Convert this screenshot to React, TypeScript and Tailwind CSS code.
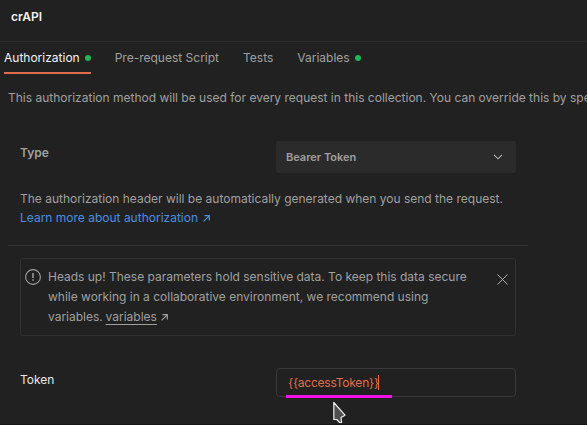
import type { ReactNode } from "react";

function ExternalArrow({ className = "" }: { className?: string }) {
  return (
    <svg className={className} width="7" height="7" viewBox="0 0 7 7" fill="none" stroke="currentColor" strokeWidth="1.2">
      <path d="M.6 6.4 6.2.8M1.4.7h4.9v4.9" />
    </svg>
  );
}

function Tab({ label, active = false, dot = false }: { label: string; active?: boolean; dot?: boolean }) {
  return (
    <div className={`flex h-8 items-center border-b-2 pt-0.5 ${active ? "border-[#e06e4c] text-[#f2f2f2]" : "border-transparent text-[#a0a0a0]"}`}>
      <span className="whitespace-nowrap">{label}</span>
      {dot && <span className="ml-[5px] size-1.5 rounded-full bg-[#22b455]" />}
    </div>
  );
}

function Line({ children }: { children: ReactNode }) {
  return <div className="flex h-5 items-center whitespace-pre">{children}</div>;
}

export default function App() {
  return (
    <div className="relative h-[425px] w-[587px] overflow-hidden border-b border-[#181416] bg-[#212121] font-['Inter',sans-serif] text-[12px] leading-5 text-[#a0a0a0]">
      <header className="h-[42px] border-b border-[#303030] pt-[7px] pl-[11px] font-semibold text-[#f2f2f2]">crAPI</header>
      <nav className="flex gap-6 pl-1">
        <Tab label="Authorization" active dot />
        <Tab label="Pre-request Script" />
        <Tab label="Tests" />
        <Tab label="Variables" dot />
      </nav>
      <p className="mt-[14px] ml-2 whitespace-nowrap">
        This authorization method will be used for every request in this collection. You can override this by spe
      </p>

      <main className="mt-[33px] ml-2 w-[520px] pl-3">
        <div className="flex h-8 w-[496px] justify-between">
          <span className="mt-0.5 font-semibold">Type</span>
          <div className="flex w-60 items-center justify-between rounded-[3px] bg-[#2b2b2b] pr-[13px] pl-[10px] text-[11px] font-semibold">
            Bearer Token
            <svg width="10" height="6" viewBox="0 0 10 6" fill="none" stroke="#b0b0b0" strokeWidth="1.1">
              <path d="m1 .8 4 4 4-4" />
            </svg>
          </div>
        </div>
        <p className="mt-4 whitespace-nowrap">The authorization header will be automatically generated when you send the request.</p>
        <div className="flex h-[18px] items-center text-[#4a8ee0]">
          Learn more about authorization
          <ExternalArrow className="ml-[5px]" />
        </div>
        <div className="mt-[18px] -ml-3 h-px bg-[#323232]" />
        <section className="mt-3 flex h-[78px] w-[496px] rounded-[3px] border border-[#303030] pt-2 pl-1">
          <svg className="mt-[2px] shrink-0" width="16" height="16" viewBox="0 0 16 16" fill="none" stroke="#a0a0a0">
            <circle cx="8" cy="8" r="7.4" strokeWidth="1.1" />
            <path d="M8 4v5" strokeWidth="1.5" />
            <path d="M8 10.3v1.5" strokeWidth="1.5" />
          </svg>
          <div className="ml-[7px] grow tracking-[-0.01px]">
            <Line>Heads up! These parameters hold sensitive data. To keep this data secure</Line>
            <Line>while working in a collaborative environment, we recommend using</Line>
            <Line>
              variables. <span className="-ml-[0.5px] underline underline-offset-[3px]">variables</span>
              <ExternalArrow className="ml-1" />
            </Line>
          </div>
          <svg className="mt-[7px] mr-[7px] shrink-0" width="11" height="11" viewBox="0 0 11 11" fill="none" stroke="#b0b0b0">
            <path d="m.5.5 10 10m0-10-10 10" />
          </svg>
        </section>
        <div className="mt-8 flex w-[496px] justify-between">
          <span className="mt-0.5 text-[#e8e8e8]">Token</span>
          <div className="flex h-[29px] w-60 items-center rounded-[4px] border border-[#3a3a3a] pl-[11px] text-[#e06e4c]">
            <span className="tracking-[-0.22px]">{"{{accessToken}}"}</span>
            <span className="-ml-[0.5px] h-[15px] w-px bg-[#f06a3c]" />
          </div>
        </div>
      </main>

      <div className="absolute top-[395px] left-[286px] h-[3px] w-[106px] bg-[#f410e8]" />
      <svg className="absolute top-[401px] left-[332px]" width="15" height="22" viewBox="0 0 15 22" fill="#505050" stroke="#eeeeee" strokeWidth="1.2" strokeLinejoin="round">
        <path d="M1.8 1.5v17h3l2.8 3h2l-.6-5 4-2.3Z" />
      </svg>
    </div>
  );
}
